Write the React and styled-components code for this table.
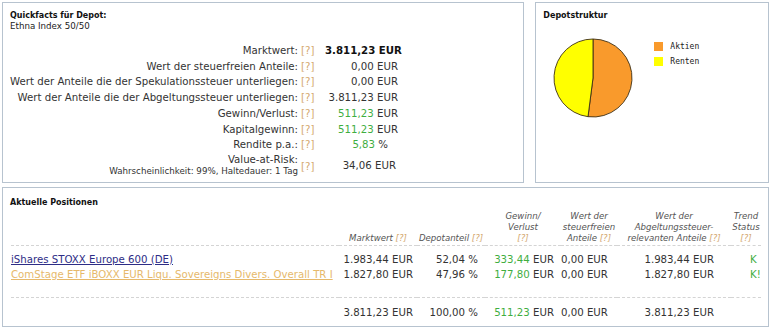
import React from "react";
import styled, { createGlobalStyle } from "styled-components";

const Global = createGlobalStyle`
  html, body { margin: 0; padding: 0; background: #ffffff; }
  body { font-family: "DejaVu Sans", Verdana, sans-serif; color: #333333; }
`;

const Page = styled.div`
  width: 770px;
  height: 328px;
  box-sizing: border-box;
  padding: 2px 1px 0 2px;
  display: flex;
  flex-direction: column;
  gap: 4px;
`;

const TopRow = styled.div`
  display: flex;
  gap: 11px;
`;

const Panel = styled.section`
  box-sizing: border-box;
  border: 1px solid #b7c3cf;
  background: #fff;
  width: ${(p) => p.$w}px;
  height: ${(p) => p.$h}px;
  overflow: hidden;
`;

const Head = styled.div`
  padding: ${(p) => p.$pt ?? 8}px 7px 0;
`;

const Title = styled.div`
  font-weight: bold;
  font-size: 8px;
  line-height: 10px;
  color: #111;
`;

const SubTitle = styled.div`
  font-size: 8.7px;
  line-height: 11px;
  color: #222;
`;

const FactGrid = styled.div`
  display: grid;
  grid-template-columns: 295px 27px 73px;
  margin-top: 11px;
  font-size: 10.2px;
  align-items: center;
`;

const Label = styled.div`
  text-align: ${(p) => p.$align || "right"};
  white-space: nowrap;
  line-height: 15.7px;
`;

const LabelStack = styled.div`
  white-space: nowrap;
  display: flex;
  flex-direction: column;
  align-items: flex-end;
  padding-top: 1px;
`;

const LabelMain = styled.span`
  line-height: 12px;
`;

const LabelNote = styled.span`
  font-size: 8.7px;
  line-height: 10px;
  color: #333;
`;

const Q = styled.span`
  color: #d4a870;
  padding-left: ${(p) => p.$pl ?? 3}px;
  ${(p) => (p.$shift ? `position: relative; top: ${p.$shift}px;` : "")}
`;

const Value = styled.div`
  text-align: right;
  white-space: nowrap;
  line-height: 15.7px;
  font-weight: ${(p) => (p.$bold ? "bold" : "normal")};
  color: ${(p) => (p.$bold ? "#111" : "#333")};
  padding-right: ${(p) => p.$pr ?? 0}px;
  ${(p) => (p.$shift ? `position: relative; top: ${p.$shift}px;` : "")}
`;

const Green = styled.span`
  color: #3fae3f;
`;

const ChartRow = styled.div`
  display: flex;
  align-items: flex-start;
  margin-top: 16px;
  padding-left: 16px;
`;

const Legend = styled.div`
  display: flex;
  flex-direction: column;
  gap: 6px;
  margin-left: 20px;
  margin-top: 5px;
`;

const LegendItem = styled.div`
  display: flex;
  align-items: center;
  gap: 7px;
  font-family: "DejaVu Sans Mono", monospace;
  font-size: 8px;
  line-height: 9px;
  color: #222;
`;

const Swatch = styled.span`
  width: 9px;
  height: 9px;
  background: ${(p) => p.$c};
  display: inline-block;
`;

const TableWrap = styled.div`
  padding: 3px 8px 0;
`;

const Table = styled.table`
  width: 750px;
  border-collapse: collapse;
  table-layout: fixed;
  font-size: 10.2px;
`;

const Th = styled.th`
  font-weight: normal;
  font-style: italic;
  font-size: 8.6px;
  line-height: 11px;
  color: #555;
  text-align: center;
  vertical-align: bottom;
  white-space: nowrap;
  padding: 0 0 1px;
  border-bottom: 1px dashed #d4d4d4;
`;

const Td = styled.td`
  text-align: ${(p) => p.$align || "right"};
  white-space: nowrap;
  line-height: 15px;
  padding: 0 ${(p) => p.$pr ?? 0}px 0 ${(p) => p.$pl ?? 0}px;
  overflow: hidden;
  color: #333;
`;

const SpacerRow = styled.tr`
  height: ${(p) => p.$h}px;
  td {
    border-bottom: ${(p) => (p.$line ? "1px dashed #d4d4d4" : "none")};
  }
`;

const NameLink = styled.a`
  color: ${(p) => (p.$visited ? "#e6b96b" : "#2d2d86")};
  text-decoration: underline;
  cursor: pointer;
`;

const Trend = styled.span`
  color: #3fae3f;
`;

const polar = (r, frac) => {
  const a = frac * 2 * Math.PI;
  return [r * Math.sin(a), -r * Math.cos(a)];
};

const Pie = () => {
  const r = 39;
  const c = 41;
  const f = 0.5204;
  const [ex, ey] = polar(r, f);
  const x1 = c + ex;
  const y1 = c + ey;
  return (
    <svg width="82" height="82" viewBox="0 0 82 82">
      <path
        d={`M ${c} ${c - r} A ${r} ${r} 0 1 1 ${x1} ${y1} L ${c} ${c} Z`}
        fill="#f99a2c"
        stroke="#3d2f14"
        strokeWidth="0.9"
      />
      <path
        d={`M ${x1} ${y1} A ${r} ${r} 0 0 1 ${c} ${c - r} L ${c} ${c} Z`}
        fill="#ffff00"
        stroke="#3d2f14"
        strokeWidth="0.9"
      />
    </svg>
  );
};

const facts = [
  { label: "Marktwert:", value: "3.811,23 EUR", bold: true },
  { label: "Wert der steuerfreien Anteile:", value: "0,00 EUR" },
  { label: "Wert der Anteile die der Spekulationssteuer unterliegen:", value: "0,00 EUR" },
  { label: "Wert der Anteile die der Abgeltungssteuer unterliegen:", value: "3.811,23 EUR" },
  { label: "Gewinn/Verlust:", green: "511,23", unit: "EUR" },
  { label: "Kapitalgewinn:", green: "511,23", unit: "EUR" },
  { label: "Rendite p.a.:", green: "5,83", unit: "%", pr: 10 },
];

const positions = [
  {
    name: "iShares STOXX Europe 600 (DE)",
    mw: "1.983,44 EUR",
    share: "52,04 %",
    gv: "333,44",
    free: "0,00 EUR",
    abg: "1.983,44 EUR",
    trend: "K",
  },
  {
    name: "ComStage ETF iBOXX EUR Liqu. Sovereigns Divers. Overall TR I",
    visited: true,
    mw: "1.827,80 EUR",
    share: "47,96 %",
    gv: "177,80",
    free: "0,00 EUR",
    abg: "1.827,80 EUR",
    trend: "K!",
  },
];

export default function App() {
  return (
    <>
      <Global />
      <Page>
        <TopRow>
          <Panel $w={523} $h={181}>
            <Head>
              <Title>Quickfacts für Depot:</Title>
              <SubTitle>Ethna Index 50/50</SubTitle>
            </Head>
            <FactGrid>
              {facts.map((f) => (
                <React.Fragment key={f.label}>
                  <Label>{f.label}</Label>
                  <Label $align="left">
                    <Q>[?]</Q>
                  </Label>
                  <Value $bold={f.bold} $pr={f.pr}>
                    {f.value ? (
                      f.value
                    ) : (
                      <>
                        <Green>{f.green}</Green> {f.unit}
                      </>
                    )}
                  </Value>
                </React.Fragment>
              ))}
              <LabelStack>
                <LabelMain>Value-at-Risk:</LabelMain>
                <LabelNote>Wahrscheinlichkeit: 99%, Haltedauer: 1 Tag</LabelNote>
              </LabelStack>
              <div>
                <Q $shift={2}>[?]</Q>
              </div>
              <Value $shift={1} $pr={2}>34,06 EUR</Value>
            </FactGrid>
          </Panel>
          <Panel $w={234} $h={181}>
            <Head>
              <Title>Depotstruktur</Title>
            </Head>
            <ChartRow>
              <Pie />
              <Legend>
                <LegendItem>
                  <Swatch $c="#f99a2c" />
                  Aktien
                </LegendItem>
                <LegendItem>
                  <Swatch $c="#ffff00" />
                  Renten
                </LegendItem>
              </Legend>
            </ChartRow>
          </Panel>
        </TopRow>
        <Panel $w={767} $h={140}>
          <Head $pt={10}>
            <Title>Aktuelle Positionen</Title>
          </Head>
          <TableWrap>
            <Table>
              <colgroup>
                <col style={{ width: 328 }} />
                <col style={{ width: 78 }} />
                <col style={{ width: 68 }} />
                <col style={{ width: 76 }} />
                <col style={{ width: 56 }} />
                <col style={{ width: 114 }} />
                <col style={{ width: 30 }} />
              </colgroup>
              <thead>
                <tr>
                  <Th />
                  <Th>
                    Marktwert <Q $pl={0}>[?]</Q>
                  </Th>
                  <Th>
                    Depotanteil <Q $pl={0}>[?]</Q>
                  </Th>
                  <Th>
                    Gewinn/
                    <br />
                    Verlust
                    <br />
                    <Q $pl={0}>[?]</Q>
                  </Th>
                  <Th>
                    Wert der
                    <br />
                    steuerfreien
                    <br />
                    Anteile <Q $pl={0}>[?]</Q>
                  </Th>
                  <Th>
                    Wert der
                    <br />
                    Abgeltungssteuer-
                    <br />
                    relevanten Anteile <Q $pl={0}>[?]</Q>
                  </Th>
                  <Th>
                    Trend
                    <br />
                    Status
                    <br />
                    <Q $pl={0}>[?]</Q>
                  </Th>
                </tr>
              </thead>
              <tbody>
                <SpacerRow $h={6}>
                  <td colSpan={7} />
                </SpacerRow>
                {positions.map((p) => (
                  <tr key={p.name}>
                    <Td $align="left" $pr={6}>
                      <NameLink $visited={p.visited}>{p.name}</NameLink>
                    </Td>
                    <Td $pr={4}>{p.mw}</Td>
                    <Td $pr={7}>{p.share}</Td>
                    <Td $pr={7}>
                      <Green>{p.gv}</Green> EUR
                    </Td>
                    <Td $pr={11}>{p.free}</Td>
                    <Td $pr={17}>{p.abg}</Td>
                    <Td $align="left" $pl={19}>
                      <Trend>{p.trend}</Trend>
                    </Td>
                  </tr>
                ))}
                <SpacerRow $h={16} $line>
                  <td colSpan={7} />
                </SpacerRow>
                <SpacerRow $h={7}>
                  <td colSpan={7} />
                </SpacerRow>
                <tr>
                  <Td />
                  <Td $pr={4}>3.811,23 EUR</Td>
                  <Td $pr={7}>100,00 %</Td>
                  <Td $pr={7}>
                    <Green>511,23</Green> EUR
                  </Td>
                  <Td $pr={11}>0,00 EUR</Td>
                  <Td $pr={17}>3.811,23 EUR</Td>
                  <Td />
                </tr>
              </tbody>
            </Table>
          </TableWrap>
        </Panel>
      </Page>
    </>
  );
}
